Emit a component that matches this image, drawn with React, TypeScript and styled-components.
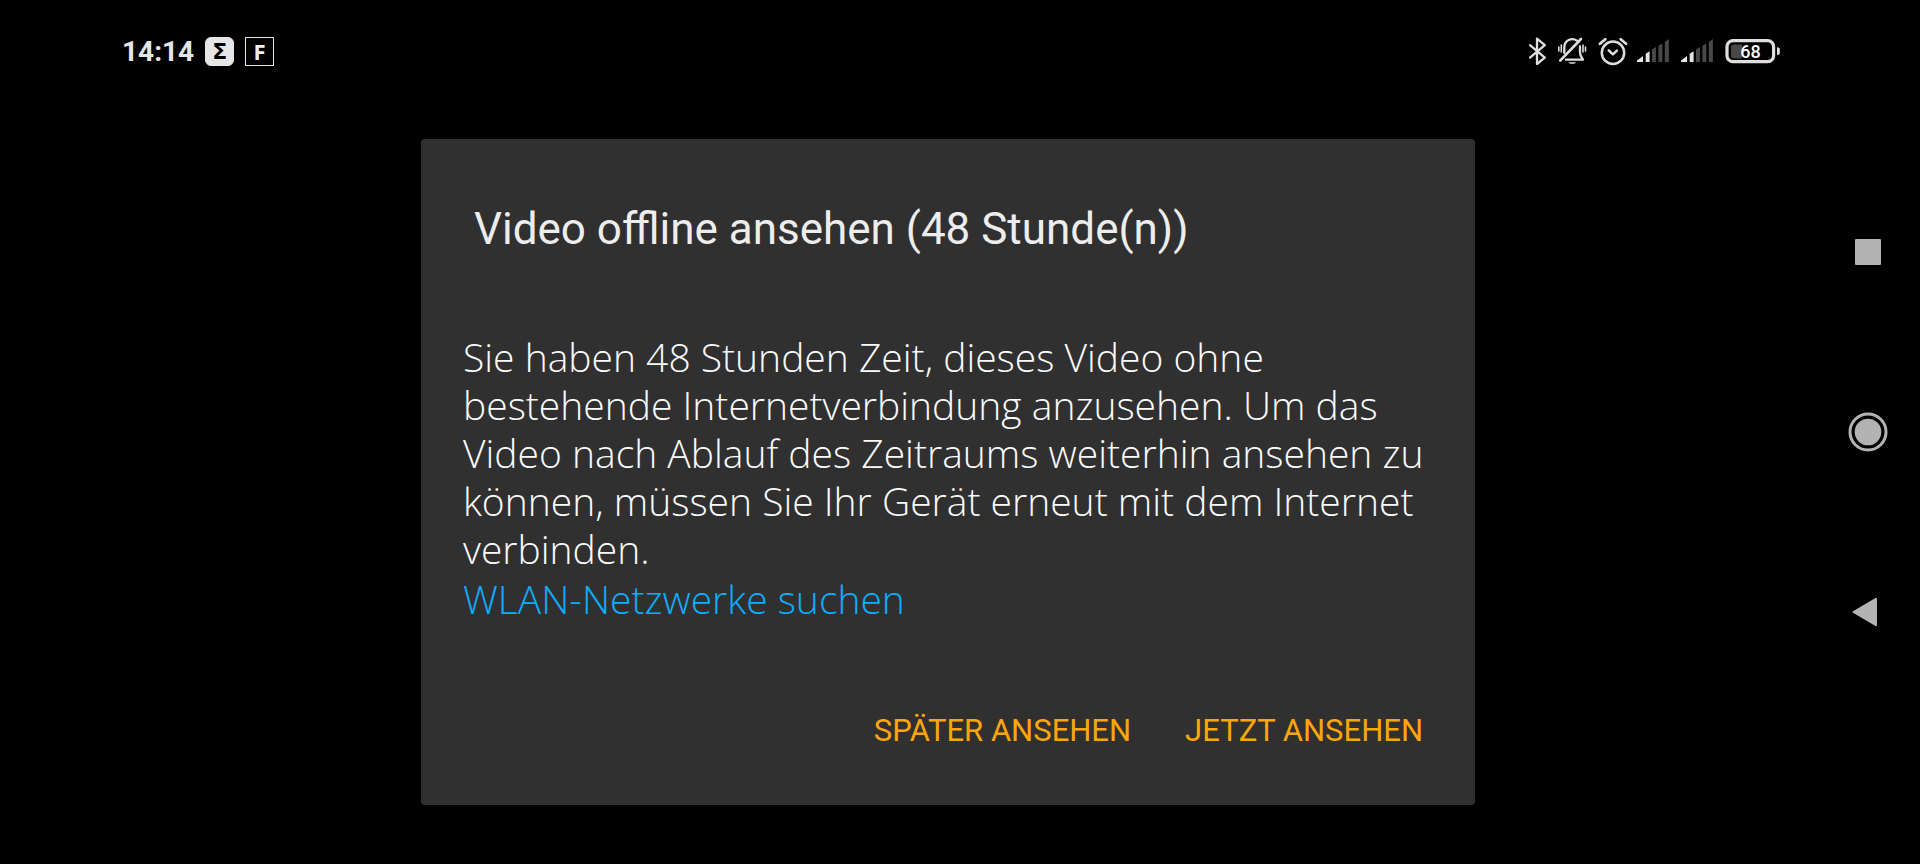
import React from "react";
import styled, { createGlobalStyle } from "styled-components";

const GlobalStyle = createGlobalStyle`
  *, *::before, *::after { box-sizing: border-box; }
  body { margin: 0; background: #000; }
  button { border: 0; padding: 0; background: none; cursor: pointer; }
  h1, p { margin: 0; font-weight: inherit; }
  svg { display: block; flex: none; overflow: visible; }
`;

const Screen = styled.div`
  display: grid;
  grid-template-columns: 80px minmax(0, 1fr) 104px;
  grid-template-rows: 80px 1fr;
  min-height: 100vh;
  background: #000;
  color: #e6e6e6;
  font-family: Roboto, "Liberation Sans", sans-serif;
`;

const StatusBar = styled.header`
  grid-column: 2;
  display: flex;
  align-items: flex-end;
  justify-content: space-between;
  padding: 0 36px 14px 42px;
`;

const StatusGroup = styled.div<{ $gap: number }>`
  display: flex;
  align-items: center;
  gap: ${(p) => p.$gap}px;
  height: 30px;
`;

const Clock = styled.time`
  padding-top: 2px;
  font-size: 28px;
  font-weight: 700;
  line-height: 30px;
`;

const AppBadge = styled.span<{ $filled?: boolean }>`
  display: flex;
  align-items: center;
  justify-content: center;
  width: 29px;
  height: 29px;
  border: 1px solid #e6e6e6;
  border-radius: ${(p) => (p.$filled ? 6 : 0)}px;
  background: ${(p) => (p.$filled ? "#e6e6e6" : "#000")};
  color: ${(p) => (p.$filled ? "#000" : "#f0f0f0")};
  font-family: ${(p) => (p.$filled ? '"DejaVu Sans"' : '"Open Sans"')}, sans-serif;
  font-size: 22px;
  font-weight: 700;
  line-height: 27px;
`;

const Stage = styled.main`
  grid-column: 2;
  display: flex;
  align-items: center;
  justify-content: center;
`;

const Dialog = styled.section`
  width: 100%;
  max-width: 1054px;
  padding: 62px 42px 46px;
  border-radius: 4px;
  background: #303030;
`;

const Title = styled.h1`
  padding-left: 11px;
  color: #ededed;
  font-size: 44px;
  font-weight: 400;
  line-height: 56px;
`;

const Message = styled.div`
  margin-top: 76px;
  font-family: "Open Sans", "Noto Sans", sans-serif;
  font-size: 39px;
  font-weight: 300;
  line-height: 48px;
  color: #fafafa;
`;

const SettingsLink = styled.a`
  display: block;
  width: fit-content;
  color: #0caefc;
  line-height: 52px;
  text-decoration: none;
`;

const Actions = styled.div`
  display: flex;
  justify-content: flex-end;
  gap: 54px;
  margin-top: 78px;
  padding-right: 10px;
`;

const ActionButton = styled.button`
  color: #fda60a;
  font-family: inherit;
  font-size: 31px;
  line-height: 56px;
`;

const NavBar = styled.nav`
  grid-column: 3;
  grid-row: 1 / span 2;
  display: flex;
  flex-direction: column;
  align-items: center;
  justify-content: center;
  gap: 132px;
`;

const NavButton = styled.button`
  display: flex;
  align-items: center;
  justify-content: center;
  width: 48px;
  height: 48px;
`;

const stroke = {
  fill: "none",
  stroke: "#dedede",
  strokeLinecap: "round" as const,
  strokeLinejoin: "round" as const,
};

const BluetoothIcon = () => (
  <svg width="18" height="30" viewBox="0 0 18 30" {...stroke} strokeWidth="2.3" aria-label="Bluetooth">
    <path d="M1 9.2 15.8 21.6 8 28V2.6l7.8 6.6L1 21.6" />
  </svg>
);

const MutedBellIcon = () => (
  <svg width="29" height="30" viewBox="0 0 29 30" {...stroke} strokeWidth="2.3" aria-label="Stumm">
    <path d="M6.3 17v-6a8 8 0 0 1 12.6-6.4M22 10.5v6c0 3 1.2 4.6 3 7.2H8" />
    <path d="M23 3 2.2 24.6" strokeWidth="2.6" />
    <path d="M10.5 26.3h7.6c-1 2-6.6 2-7.6 0z" fill="#dedede" stroke="none" />
    <path d="M.8 11v4M3.3 9v7M25 9v7M27.5 11v4" strokeWidth="1.6" />
  </svg>
);

const AlarmIcon = () => (
  <svg width="28" height="30" viewBox="0 0 28 30" {...stroke} strokeWidth="2.5" aria-label="Wecker">
    <circle cx="15" cy="16.7" r="11.2" />
    <path d="M1.9 7.8 7.3 3.2M22.7 3.2l5.4 4.6" strokeWidth="2.7" />
    <path d="m10.7 14.3 4.2 4 4-3.7" />
  </svg>
);

const SignalIcon = () => (
  <svg width="33" height="30" viewBox="0 0 33 30" aria-label="Mobilfunksignal">
    <path d="M0 26v-1.5L6 20v6zM8.7 26v-8.2l3.9-2.5V26z" fill="#e6e6e6" />
    <path d="M15 26V13.5l3.9-2.5v15zM21.4 26V10l3.900-2.700V26zM27.800 26V5.900L31.900 3v23z" fill="#484848" />
  </svg>
);

const BatteryIcon = () => (
  <svg width="55" height="30" viewBox="0 0 55 30" aria-label="Akku 68 Prozent">
    <rect x="2" y="4.7" width="46.6" height="21" rx="6" fill="none" stroke="#dedede" strokeWidth="3.2" />
    <path d="M9 8.5h8v14H9a3 3 0 0 1-3-3v-8a3 3 0 0 1 3-3z" fill="#484848" />
    <path d="M52 11.2c1.8 0 2.8.8 2.8 2v3.8c0 1.2-1 2-2.8 2z" fill="#dedede" />
    <text x="25.5" y="22" textAnchor="middle" fontFamily="Roboto, sans-serif" fontSize="18" fontWeight="500" fill="#fff">
      68
    </text>
  </svg>
);

export default function App() {
  return (
    <Screen>
      <GlobalStyle />
      <StatusBar>
        <StatusGroup $gap={11}>
          <Clock>14:14</Clock>
          <AppBadge $filled>Σ</AppBadge>
          <AppBadge>F</AppBadge>
        </StatusGroup>
        <StatusGroup $gap={11}>
          <BluetoothIcon />
          <MutedBellIcon />
          <AlarmIcon />
          <SignalIcon />
          <SignalIcon />
          <BatteryIcon />
        </StatusGroup>
      </StatusBar>

      <Stage>
        <Dialog role="dialog" aria-labelledby="dialog-title">
          <Title id="dialog-title">Video offline ansehen (48 Stunde(n))</Title>
          <Message>
            <p>
              Sie haben 48 Stunden Zeit, dieses Video ohne bestehende Internetverbindung anzusehen. Um das
              Video nach Ablauf des Zeitraums weiterhin ansehen zu können, müssen Sie Ihr Gerät erneut mit
              dem Internet verbinden.
            </p>
            <SettingsLink href="#wlan">WLAN-Netzwerke suchen</SettingsLink>
          </Message>
          <Actions>
            <ActionButton type="button">SPÄTER ANSEHEN</ActionButton>
            <ActionButton type="button">JETZT ANSEHEN</ActionButton>
          </Actions>
        </Dialog>
      </Stage>

      <NavBar aria-label="Navigation">
        <NavButton type="button" aria-label="Letzte Apps">
          <svg width="26" height="26" viewBox="0 0 26 26">
            <rect width="26" height="26" rx="1" fill="#b3b3b3" />
          </svg>
        </NavButton>
        <NavButton type="button" aria-label="Startbildschirm">
          <svg width="40" height="40" viewBox="0 0 40 40">
            <circle cx="20" cy="20" r="18" fill="none" stroke="#b3b3b3" strokeWidth="3" />
            <circle cx="20" cy="20" r="13.3" fill="#b3b3b3" />
          </svg>
        </NavButton>
        <NavButton type="button" aria-label="Zurück">
          <svg width="32" height="30" viewBox="0 0 32 30">
            <path d="M1.5 15 24 1.8v26.4z" fill="#b3b3b3" stroke="#b3b3b3" strokeWidth="2" strokeLinejoin="round" />
          </svg>
        </NavButton>
      </NavBar>
    </Screen>
  );
}
